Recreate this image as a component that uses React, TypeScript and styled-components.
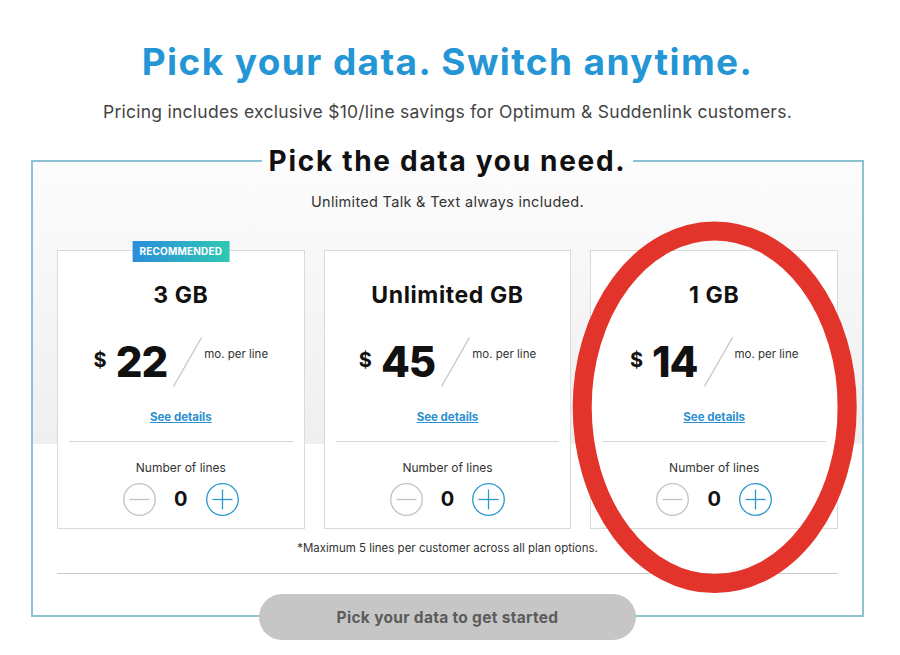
import React from "react";
import styled, { createGlobalStyle } from "styled-components";

const GlobalStyle = createGlobalStyle`
  html, body { margin: 0; padding: 0; background: #fff; }
  body { font-family: Inter, "Liberation Sans", sans-serif; color: #222; }
  * { box-sizing: border-box; }
`;

const Page = styled.main`
  width: 900px;
  padding: 40px 36px 0 31px;
  display: flex;
  flex-direction: column;
  text-align: center;
`;

const Heading = styled.h1`
  margin: 0;
  font-size: 37px;
  line-height: 44px;
  font-weight: 700;
  color: #2495d5;
  letter-spacing: 1.4px;
`;

const Subtitle = styled.p`
  margin: 16px 0 0;
  font-size: 17.5px;
  line-height: 24px;
  color: #444;
  letter-spacing: 0.25px;
`;

const Frame = styled.fieldset`
  margin: 21px 0 0;
  padding: 0 24px 41px;
  min-width: 0;
  border: 2px solid #8dc2d4;
  background: linear-gradient(180deg, #fcfcfc 0px, #efefef 282px, #fff 282px);
  text-align: center;
`;

const Legend = styled.legend`
  margin: 0 auto;
  padding: 0 7px;
  font-size: 28px;
  line-height: 32px;
  font-weight: 700;
  color: #111;
  letter-spacing: 1.7px;
`;

const Tagline = styled.p`
  margin: 15px 0 0;
  font-size: 14.5px;
  line-height: 20px;
  color: #333;
  letter-spacing: 0.3px;
`;

const CardGrid = styled.div`
  display: grid;
  grid-template-columns: repeat(3, 1fr);
  gap: 19px;
  margin-top: 38px;
`;

const Card = styled.section`
  position: relative;
  background: #fff;
  border: 1px solid #d9d9d9;
  padding: 30px 11px 12px;
  display: flex;
  flex-direction: column;
  align-items: center;
`;

const Badge = styled.span`
  position: absolute;
  top: -10px;
  left: 50%;
  transform: translateX(-50%);
  height: 21px;
  padding: 0 7px;
  background: linear-gradient(90deg, #2b8edb, #2fc8b4);
  color: #fff;
  font-size: 10px;
  line-height: 21px;
  font-weight: 700;
  letter-spacing: 0.2px;
  white-space: nowrap;
`;

const PlanTitle = styled.h3`
  margin: 0;
  font-size: 23px;
  line-height: 28px;
  font-weight: 700;
  color: #111;
  letter-spacing: 0.6px;
`;

const PriceRow = styled.div`
  display: flex;
  align-items: flex-start;
  justify-content: center;
  height: 50px;
  margin-top: 28px;
`;

const Currency = styled.span`
  font-size: 20px;
  line-height: 24px;
  font-weight: 700;
  margin-top: 11px;
  margin-right: 9px;
  color: #111;
`;

const Amount = styled.span`
  font-size: 42px;
  line-height: 50px;
  font-weight: 800;
  letter-spacing: -1px;
  color: #111;
`;

const Slash = styled.svg`
  width: 29px;
  height: 50px;
  margin-left: 6px;
  flex: none;
`;

const Per = styled.span`
  font-size: 11.5px;
  line-height: 14px;
  margin-top: 10px;
  margin-left: 2px;
  color: #333;
`;

const DetailsLink = styled.a`
  margin-top: 22px;
  font-size: 11.5px;
  line-height: 16px;
  font-weight: 700;
  color: #2a90d0;
  text-decoration: underline;
  cursor: pointer;
`;

const CardDivider = styled.div`
  align-self: stretch;
  height: 1px;
  background: #d6d6d6;
  margin-top: 16px;
`;

const LinesLabel = styled.div`
  margin-top: 18px;
  font-size: 12px;
  line-height: 16px;
  color: #333;
`;

const Counter = styled.div`
  display: flex;
  align-items: center;
  gap: 18px;
  margin-top: 7px;
`;

const RoundButton = styled.button<{ $active?: boolean }>`
  width: 33px;
  height: 33px;
  padding: 0;
  border: none;
  background: transparent;
  display: flex;
  align-items: center;
  justify-content: center;
  color: ${(p) => (p.$active ? "#2f97cf" : "#c2c2c2")};
  cursor: pointer;
`;

const Count = styled.span`
  font-size: 20px;
  line-height: 33px;
  font-weight: 700;
  color: #111;
`;

const Footnote = styled.p`
  margin: 12px 0 0;
  font-size: 11.5px;
  line-height: 14px;
  color: #333;
`;

const Rule = styled.hr`
  margin: 18px 0 0;
  border: 0;
  border-top: 1px solid #c9c9c9;
`;

const StartButton = styled.button`
  align-self: center;
  margin-top: -23px;
  width: 377px;
  height: 46px;
  border: none;
  border-radius: 23px;
  background: #c6c6c6;
  color: #5b5b5b;
  font-family: inherit;
  font-size: 15.5px;
  font-weight: 700;
  letter-spacing: 0.3px;
`;

const Highlight = styled.svg`
  position: absolute;
  left: -21px;
  top: -32px;
  width: 290px;
  height: 378px;
  pointer-events: none;
  z-index: 2;
`;

const StepIcon = ({ plus }: { plus?: boolean }) => (
  <svg width="33" height="33" viewBox="0 0 33 33" fill="none" stroke="currentColor" strokeWidth="1.3">
    <circle cx="16.5" cy="16.5" r="15.8" />
    <line x1="6.5" y1="16.5" x2="26.5" y2="16.5" />
    {plus && <line x1="16.5" y1="6.5" x2="16.5" y2="26.5" />}
  </svg>
);

type Plan = { name: string; price: number; recommended?: boolean; highlighted?: boolean };

const plans: Plan[] = [
  { name: "3 GB", price: 22, recommended: true },
  { name: "Unlimited GB", price: 45 },
  { name: "1 GB", price: 14, highlighted: true },
];

export default function App() {
  return (
    <>
      <GlobalStyle />
      <Page>
        <Heading>Pick your data. Switch anytime.</Heading>
        <Subtitle>Pricing includes exclusive $10/line savings for Optimum &amp; Suddenlink customers.</Subtitle>
        <Frame>
          <Legend>Pick the data you need.</Legend>
          <Tagline>Unlimited Talk &amp; Text always included.</Tagline>
          <CardGrid>
            {plans.map((plan) => (
              <Card key={plan.name}>
                {plan.recommended && <Badge>RECOMMENDED</Badge>}
                <PlanTitle>{plan.name}</PlanTitle>
                <PriceRow>
                  <Currency>$</Currency>
                  <Amount>{plan.price}</Amount>
                  <Slash viewBox="0 0 29 50">
                    <line x1="28.5" y1="0.5" x2="0.5" y2="49.5" stroke="#c9c9c9" strokeWidth="1.4" />
                  </Slash>
                  <Per>mo. per line</Per>
                </PriceRow>
                <DetailsLink>See details</DetailsLink>
                <CardDivider />
                <LinesLabel>Number of lines</LinesLabel>
                <Counter>
                  <RoundButton aria-label="Remove line">
                    <StepIcon />
                  </RoundButton>
                  <Count>0</Count>
                  <RoundButton $active aria-label="Add line">
                    <StepIcon plus />
                  </RoundButton>
                </Counter>
                {plan.highlighted && (
                  <Highlight viewBox="0 0 290 378">
                    <ellipse cx="144.7" cy="188.3" rx="132.5" ry="176.3" fill="none" stroke="#e3342b" strokeWidth="19" />
                  </Highlight>
                )}
              </Card>
            ))}
          </CardGrid>
          <Footnote>*Maximum 5 lines per customer across all plan options.</Footnote>
          <Rule />
        </Frame>
        <StartButton>Pick your data to get started</StartButton>
      </Page>
    </>
  );
}
